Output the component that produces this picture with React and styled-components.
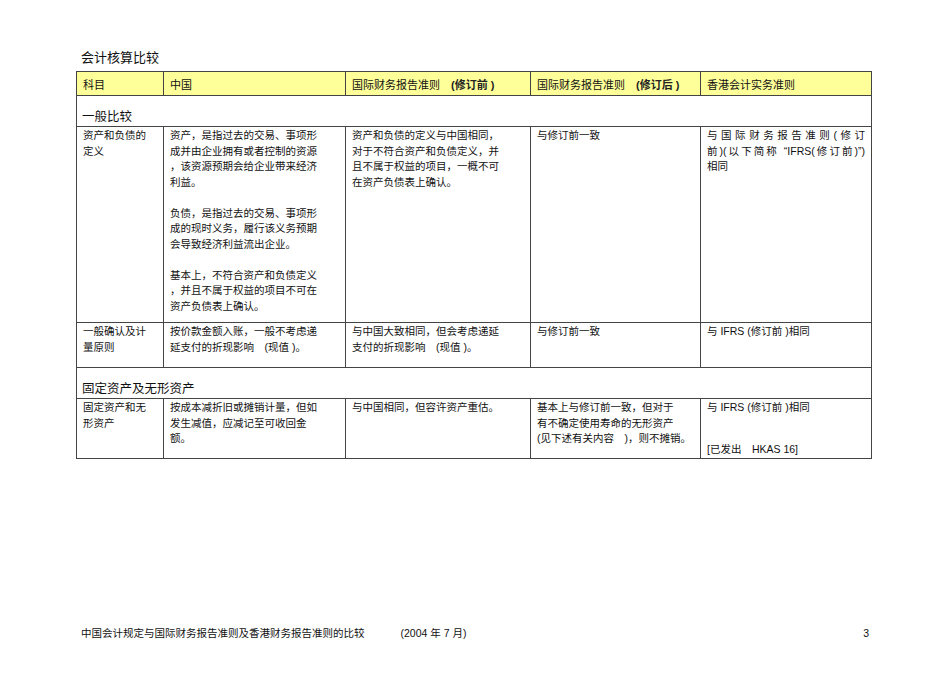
import styled, { createGlobalStyle } from "styled-components";

const GlobalStyle = createGlobalStyle`
  html, body {
    margin: 0;
    padding: 0;
    background: #fff;
  }
  body {
    font-family: "Liberation Sans", "Noto Sans CJK SC", sans-serif;
    color: #111;
  }
`;

// 每个单元格按原文逐行排版，空字符串表示空行
const rows = [
  {
    section: "一般比较",
  },
  {
    h: 196,
    cells: [
      ["资产和负债的", "定义"],
      [
        "资产，是指过去的交易、事项形",
        "成并由企业拥有或者控制的资源",
        "，该资源预期会给企业带来经济",
        "利益。",
        "",
        "负债，是指过去的交易、事项形",
        "成的现时义务，履行该义务预期",
        "会导致经济利益流出企业。",
        "",
        "基本上，不符合资产和负债定义",
        "，并且不属于权益的项目不可在",
        "资产负债表上确认。",
      ],
      [
        "资产和负债的定义与中国相同，",
        "对于不符合资产和负债定义，并",
        "且不属于权益的项目，一概不可",
        "在资产负债表上确认。",
      ],
      ["与修订前一致"],
      [
        { text: "与国际财务报告准则(修订", justify: true },
        { text: "前)(以下简称 “IFRS(修订前)”)", justify: true },
        "相同",
      ],
    ],
  },
  {
    h: 45,
    cells: [
      ["一般确认及计", "量原则"],
      ["按价款金额入账，一般不考虑递", "延支付的折现影响　(现值 )。"],
      ["与中国大致相同，但会考虑递延", "支付的折现影响　(现值 )。"],
      ["与修订前一致"],
      ["与 IFRS (修订前 )相同"],
    ],
  },
  {
    section: "固定资产及无形资产",
  },
  {
    h: 60,
    cells: [
      ["固定资产和无", "形资产"],
      ["按成本减折旧或摊销计量，但如", "发生减值，应减记至可收回金", "额。"],
      ["与中国相同，但容许资产重估。"],
      [
        "基本上与修订前一致，但对于",
        "有不确定使用寿命的无形资产",
        "(见下述有关内容　)，则不摊销。",
      ],
      ["与 IFRS (修订前 )相同", { gap: 26 }, "[已发出　HKAS 16]"],
    ],
  },
];

const renderLine = (l, k) => {
  if (typeof l === "string") return <Line key={k}>{l || "\u00a0"}</Line>;
  if (l.gap) return <Gap key={k} $h={l.gap} />;
  return (
    <Line key={k} $justify>
      {l.text}
    </Line>
  );
};

const App = () => {
  return (
    <Page>
      <GlobalStyle />
      <Title>会计核算比较</Title>
      <Table>
        <colgroup>
          <col style={{ width: 87 }} />
          <col style={{ width: 182 }} />
          <col style={{ width: 185 }} />
          <col style={{ width: 170 }} />
          <col style={{ width: 171 }} />
        </colgroup>
        <thead>
          <tr>
            <Head>科目</Head>
            <Head>中国</Head>
            <Head>
              国际财务报告准则　<Strong>(修订前 )</Strong>
            </Head>
            <Head>
              国际财务报告准则　<Strong>(修订后 )</Strong>
            </Head>
            <Head>香港会计实务准则</Head>
          </tr>
        </thead>
        <tbody>
          {rows.map((row, i) =>
            row.section ? (
              <tr key={i}>
                <Section colSpan={5}>{row.section}</Section>
              </tr>
            ) : (
              <Row key={i} $h={row.h}>
                {row.cells.map((lines, j) => (
                  <Cell key={j}>{lines.map(renderLine)}</Cell>
                ))}
              </Row>
            )
          )}
        </tbody>
      </Table>
      <Footer>
        <FooterText>
          中国会计规定与国际财务报告准则及香港财务报告准则的比较
          <Date>(2004 年 7 月)</Date>
        </FooterText>
        <PageNum>3</PageNum>
      </Footer>
    </Page>
  );
};
export default App;

const Page = styled.div`
  width: 950px;
  height: 673px;
  box-sizing: border-box;
  padding: 50px 0 0 76px;
  display: flex;
  flex-direction: column;
`;

const Title = styled.div`
  font-size: 13px;
  line-height: 16px;
  padding-left: 5px;
  margin-bottom: 5px;
`;

const Table = styled.table`
  border-collapse: collapse;
  table-layout: fixed;
  width: 796px;
  border: 1px solid #444;
`;

const Head = styled.th`
  background: #ffff99;
  border: 1px solid #444;
  height: 23px;
  padding: 0 6px;
  text-align: left;
  font-weight: normal;
  font-size: 11px;
  vertical-align: middle;
  white-space: nowrap;
`;

const Strong = styled.span`
  font-weight: bold;
  color: #222;
`;

const Section = styled.td`
  height: 29px;
  padding: 0 5px 1px;
  font-size: 12.5px;
  line-height: 15px;
  vertical-align: bottom;
  border: 1px solid #444;
`;

const Row = styled.tr`
  height: ${(p) => p.$h}px;
`;

const Cell = styled.td`
  border: 1px solid #444;
  padding: 1px 6px 0;
  vertical-align: top;
  font-size: 10.5px;
  line-height: 15.5px;
`;

const Line = styled.div`
  white-space: nowrap;
  ${(p) =>
    p.$justify &&
    `
    white-space: normal;
    text-align: justify;
    text-align-last: justify;
  `}
`;

const Gap = styled.div`
  height: ${(p) => p.$h}px;
`;

const Footer = styled.div`
  margin-top: auto;
  margin-bottom: 33px;
  width: 796px;
  display: flex;
  justify-content: space-between;
  align-items: center;
  font-size: 10.5px;
  line-height: 14px;
`;

const FooterText = styled.div`
  padding-left: 5px;
`;

const Date = styled.span`
  margin-left: 36px;
`;

const PageNum = styled.div`
  padding-right: 3px;
`;
